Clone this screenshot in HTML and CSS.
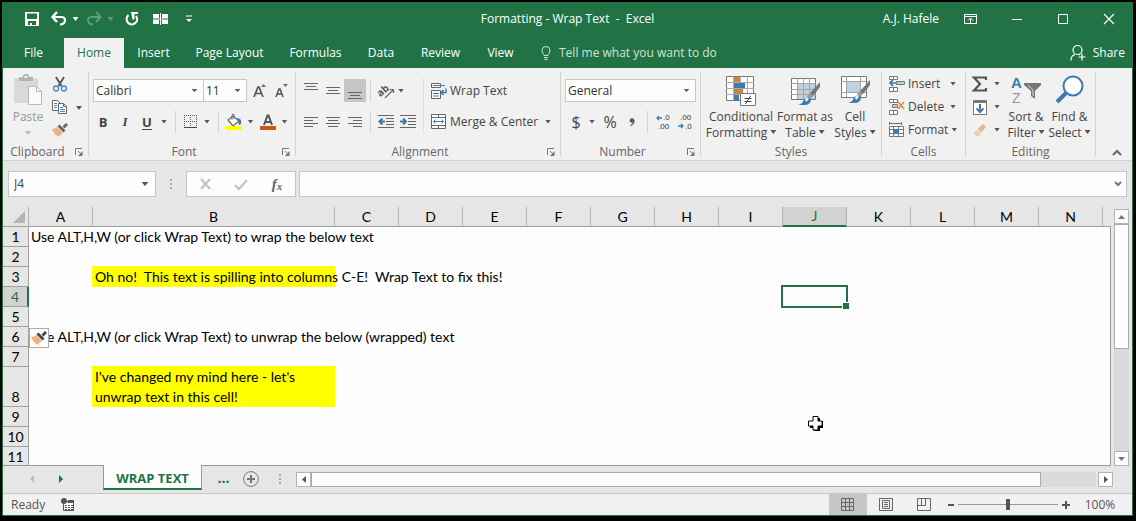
FILE: index.html
```html
<!DOCTYPE html>
<html lang="en">
<head>
<meta charset="utf-8">
<title>Formatting - Wrap Text - Excel</title>
<link rel="stylesheet" href="styles.css">
</head>
<body>
<div class="window">
  <header class="titlebar">
    <div class="quick">
      <button class="q q-save" aria-label="Save"><svg width="14" height="14" viewBox="0 0 14 14"><path d="M0 0h14v14H0zM2 1.500v5.500h10V1.500zM3 9v4h2v-2h2v2h4V9z" fill="#fff" fill-rule="evenodd"/></svg></button>
      <button class="q q-wide" aria-label="Undo"><svg width="16" height="14" viewBox="0 0 16 14"><path d="M2 5h8c6 0 5 7-1 7.500" fill="none" stroke="#fff" stroke-width="2.200"/><path d="M6 0L1.500 5L6 10" fill="none" stroke="#fff" stroke-width="2.400"/></svg><span class="caret"></span></button>
      <button class="q q-wide q-off" aria-label="Redo"><svg width="16" height="14" viewBox="0 0 16 14"><path d="M14 5H6C0 5 1 12 7 12.500" fill="none" stroke="#fff" stroke-width="2"/><path d="M10 0l4.500 5L10 10" fill="none" stroke="#fff" stroke-width="2"/></svg><span class="caret"></span></button>
      <button class="q q-mid" aria-label="Refresh"><svg width="14" height="14" viewBox="0 0 14 14"><path d="M3.500 3.200A5.200 5.200 0 1 0 11 4" fill="none" stroke="#fff" stroke-width="2.200"/><path d="M6 0h7v2h-3.500v5.500H7.500z" fill="#fff"/></svg></button>
      <button class="q q-mid" aria-label="Freeze panes"><svg width="15" height="12" viewBox="0 0 15 12"><path d="M0 1h6v4H0zM9 1h6v4H9zM0 7h6v4H0zM9 7h6v4H9z" fill="#fff"/><path d="M7.500 0v12M0 6h15" stroke="#fff"/></svg></button>
      <button class="q q-end" aria-label="Customize toolbar"><svg width="6" height="8" viewBox="0 0 6 8"><path d="M0 1h6" stroke="#fff"/><path d="M0 4h6L3 7z" fill="#fff"/></svg></button>
    </div>
    <h1 class="title">Formatting - Wrap Text&nbsp; -&nbsp; Excel</h1>
    <div class="controls">
      <span class="user">A.J. Hafele</span>
      <button class="wc" aria-label="Ribbon display options"><svg width="14" height="11" viewBox="0 0 14 11"><path d="M.5 .5h12v9H.5zM.5 2.500h12M6.500 9V4.500M4 6.500l2.500-2.500L9 6.500" fill="none" stroke="#fff"/></svg></button>
      <button class="wc" aria-label="Minimize"><svg width="10" height="10" viewBox="0 0 10 10"><path d="M0 5.500h10" stroke="#fff"/></svg></button>
      <button class="wc" aria-label="Maximize"><svg width="10" height="10" viewBox="0 0 10 10"><path d="M.5 .5h9v9h-9z" fill="none" stroke="#fff"/></svg></button>
      <button class="wc" aria-label="Close"><svg width="10" height="10" viewBox="0 0 10 10"><path d="M0 0l10 10M10 0L0 10" stroke="#fff" stroke-width="1.200"/></svg></button>
    </div>
  </header>

  <nav class="tabs">
    <a href="#file">File</a><a href="#home" class="active">Home</a><a href="#insert">Insert</a><a href="#layout">Page Layout</a><a href="#formulas">Formulas</a><a href="#data">Data</a><a href="#review">Review</a><a href="#view">View</a>
    <button class="tell"><svg width="10" height="14" viewBox="0 0 10 14"><path d="M3 9.500C3 8 1 7 1 4.500a4 4 0 0 1 8 0C9 7 7 8 7 9.500zM3 11.500h4M3.500 13.500h3" fill="none" stroke="#cfe3d8"/></svg>Tell me what you want to do</button>
    <button class="share"><svg width="16" height="16" viewBox="0 0 16 16"><path d="M1 15.500C1 12 3 10 5 9.500M7.500 .5a4.500 4.500 0 0 1 0 9 4.500 4.500 0 0 1 0-9M9 9.500l1 .5M12 8.500v7M8.500 12h7" fill="none" stroke="#fff" stroke-width="1.200"/></svg>Share</button>
  </nav>

  <section class="ribbon">
    <div class="group">
      <div class="body clip">
        <button class="paste"><svg width="30" height="32" viewBox="0 0 30 32"><path d="M1 4h24v25H1z" fill="#d9d9d9"/><path d="M6 7V3h4V1q3-2 6 0v2h4v4z" fill="#b3b3b3"/><path d="M11.500 2h3v2h-3z" fill="#f1f1f1"/><path d="M15.500 12.500h8l5 5v13h-13z" fill="#fbfbff" stroke="#b8b8b8"/><path d="M23.500 12v5.500H29" fill="none" stroke="#b8b8b8"/></svg><span>Paste</span><span class="caret"></span></button>
        <div class="stack">
          <button aria-label="Cut"><svg width="16" height="16" viewBox="0 0 16 16"><path d="M4 1l5.500 9M12 1l-5.500 9" stroke="#5a5a5a" stroke-width="2"/><circle cx="4" cy="12.500" r="2.500" fill="none" stroke="#4a86b8" stroke-width="1.300"/><circle cx="12" cy="12.500" r="2.500" fill="none" stroke="#4a86b8" stroke-width="1.300"/></svg></button>
          <button aria-label="Copy"><svg width="16" height="16" viewBox="0 0 16 16"><path d="M.5 1.500h5l3 3v7h-8z" fill="#fff" stroke="#666"/><path d="M2 4.500h3M2 6.500h3M2 8.500h3" stroke="#4a86b8"/><path d="M6.500 4.500h5l3 3v7h-8z" fill="#fff" stroke="#666"/><path d="M11.500 4.500v3h3" fill="none" stroke="#666"/><path d="M8 8.500h3M8 10.500h5M8 12.500h5" stroke="#4a86b8"/></svg></button>
          <button aria-label="Format painter"><svg width="16" height="14" viewBox="0 0 16 14"><path d="M0 6q3 0 5-2l6 6q-3 1-4 4Q2 11 0 6z" fill="#edb27e"/><path d="M5.500 3.500l2-2 6 6-2 2z" fill="#666"/><path d="M10.500 3.500L14 0l2 2-3.500 3.500z" fill="#666"/></svg></button>
        </div>
        <span class="caret"></span>
      </div>
      <div class="foot"><h2>Clipboard</h2><button class="launch" aria-label="Clipboard options"><svg width="8" height="8" viewBox="0 0 8 8"><path d="M.5 7V.5H7" fill="none" stroke="#777"/><path d="M3 3l4 4" stroke="#777"/><path d="M7.500 3v5H3z" fill="#777"/></svg></button></div>
    </div>
    <i class="rule"></i>

    <div class="group">
      <div class="body rows">
        <div class="row font1">
          <select aria-label="Font"><option>Calibri</option></select>
          <select aria-label="Font size"><option>11</option></select>
          <button aria-label="Increase font size"><svg width="14" height="16" viewBox="0 0 14 16"><path d="M1 14L5 4h1l4 10M2.500 10.500h6" fill="none" stroke="#555" stroke-width="1.700"/><path d="M8 4l2.500-3L13 4z" fill="#3d7ab0"/></svg></button>
          <button aria-label="Decrease font size"><svg width="14" height="16" viewBox="0 0 14 16"><path d="M1 14l3-8h1l3 8M2 11h5" fill="none" stroke="#555" stroke-width="1.600"/><path d="M8 1h5l-2.500 3z" fill="#3d7ab0"/></svg></button>
        </div>
        <div class="row font2">
          <button><b>B</b></button><button><b class="it">I</b></button><button><b class="un">U</b></button><span class="caret"></span><i class="sep"></i>
          <button aria-label="Borders"><svg width="13" height="13" viewBox="0 0 13 13"><path d="M.5 0v12M6.500 0v12M12.500 0v12M0 .5h13M0 6.500h13" stroke="#555" stroke-dasharray="1 1"/><path d="M0 12.500h13" stroke="#444"/></svg></button><span class="caret"></span><i class="sep"></i>
          <button aria-label="Fill color"><svg width="16" height="16" viewBox="0 0 16 16"><path d="M2 6l5-4 6 5-6 5z" fill="#fff" stroke="#666" stroke-width="1.200"/><path d="M6 6V1q1.500-2 2 0v4" fill="none" stroke="#666"/><path d="M11 4q5 0 4 6l-2 1z" fill="#3d7ab0"/><path d="M0 12h16v4H0z" fill="#ff0"/></svg></button><span class="caret"></span>
          <button aria-label="Font color"><svg width="16" height="16" viewBox="0 0 16 16"><path d="M4 11l3.500-9.500h1L12 11M5.500 8h5" fill="none" stroke="#555" stroke-width="2"/><path d="M0 12h16v4H0z" fill="#c55a11"/></svg></button><span class="caret"></span>
        </div>
      </div>
      <div class="foot"><h2>Font</h2><button class="launch" aria-label="Font options"><svg width="8" height="8" viewBox="0 0 8 8"><path d="M.5 7V.5H7" fill="none" stroke="#777"/><path d="M3 3l4 4" stroke="#777"/><path d="M7.500 3v5H3z" fill="#777"/></svg></button></div>
    </div>
    <i class="rule"></i>

    <div class="group">
      <div class="body align">
        <div class="aligngrid">
          <button aria-label="Top align"><svg width="14" height="16" viewBox="0 0 14 16"><path d="M0 .5h14M2 3.500h10M0 6.500h14" stroke="#666"/></svg></button>
          <button aria-label="Middle align"><svg width="14" height="16" viewBox="0 0 14 16"><path d="M0 4.500h14M2 7.500h10M0 10.500h14" stroke="#666"/></svg></button>
          <button aria-label="Bottom align" class="on"><svg width="14" height="16" viewBox="0 0 14 16"><path d="M0 9.500h14M2 12.500h10M0 15.500h14" stroke="#666"/></svg></button>
          <i class="sep"></i>
          <button aria-label="Orientation"><svg width="18" height="16" viewBox="0 0 18 16"><text x="0" y="11" transform="rotate(-40 6 8)" class="ab">ab</text><path d="M8 15l8-8M12.500 6.500H16.500V10" fill="none" stroke="#666" stroke-width="1.200"/></svg></button>
          <span class="caret near"></span>
          <button aria-label="Align left"><svg width="14" height="12" viewBox="0 0 14 12"><path d="M0 1.500h14M0 4.500h9M0 7.500h14M0 10.500h9" stroke="#666"/></svg></button>
          <button aria-label="Center"><svg width="14" height="12" viewBox="0 0 14 12"><path d="M0 1.500h14M2 4.500h10M0 7.500h14M2 10.500h10" stroke="#666"/></svg></button>
          <button aria-label="Align right"><svg width="14" height="12" viewBox="0 0 14 12"><path d="M0 1.500h14M5 4.500h9M0 7.500h14M5 10.500h9" stroke="#666"/></svg></button>
          <i class="sep"></i>
          <button aria-label="Decrease indent"><svg width="16" height="14" viewBox="0 0 16 14"><path d="M0 .5h16M8 3.500h8M8 6.500h8M8 9.500h8M0 12.500h16" stroke="#666"/><path d="M7 6.500H2M4.500 3.500l-3 3 3 3" fill="none" stroke="#3d7ab0" stroke-width="2"/></svg></button>
          <button aria-label="Increase indent"><svg width="16" height="14" viewBox="0 0 16 14"><path d="M0 .5h16M8 3.500h8M8 6.500h8M8 9.500h8M0 12.500h16" stroke="#666"/><path d="M0 6.500h5M3 3.500l3 3-3 3" fill="none" stroke="#3d7ab0" stroke-width="2"/></svg></button>
        </div>
        <i class="tall"></i>
        <div class="wraps">
          <button class="lab"><svg width="16" height="16" viewBox="0 0 16 16"><path d="M.5 .5h9v4h-9zM.5 7.500h9v8h-9z" fill="#fff" stroke="#666"/><path d="M2 2.500h12M2 10.500h6M2 13h6" stroke="#3d7ab0" stroke-width="1.200"/><path d="M15 5.500v4h-5M12.500 7l-2.500 2.500 2.500 2.500" fill="none" stroke="#3d7ab0" stroke-width="1.500"/></svg>Wrap Text</button>
          <button class="lab"><svg width="16" height="16" viewBox="0 0 16 16"><path d="M.5 .5h14v14H.5zM.5 3.500h14M.5 11.500h14M7.500 .5v3M7.500 11.500v3" fill="#fff" stroke="#666"/><path d="M3 7.500h9M4.500 5.500l-2 2 2 2M10.500 5.500l2 2-2 2" fill="none" stroke="#3d7ab0"/></svg>Merge &amp; Center<span class="caret push"></span></button>
        </div>
      </div>
      <div class="foot"><h2>Alignment</h2><button class="launch" aria-label="Alignment options"><svg width="8" height="8" viewBox="0 0 8 8"><path d="M.5 7V.5H7" fill="none" stroke="#777"/><path d="M3 3l4 4" stroke="#777"/><path d="M7.500 3v5H3z" fill="#777"/></svg></button></div>
    </div>
    <i class="rule"></i>

    <div class="group">
      <div class="body rows">
        <div class="row num1"><select aria-label="Number format"><option>General</option></select></div>
        <div class="row num2">
          <button class="big">$</button><span class="caret"></span><button class="big">%</button><button aria-label="Comma style"><svg width="6" height="8" viewBox="0 0 6 8"><circle cx="3" cy="2.500" r="2.300" fill="#555"/><path d="M5 2.500Q5 6 1.500 7.500" fill="none" stroke="#555" stroke-width="1.300"/></svg></button><i class="sep"></i>
          <button aria-label="Increase decimal"><svg width="16" height="16" viewBox="0 0 16 16"><text x="8" y="6" class="dec">.0</text><text x="3" y="15" class="dec">.00</text><path d="M7 4H2M4 2L2 4l2 2" fill="none" stroke="#3d7ab0" stroke-width="1.300"/></svg></button>
          <button aria-label="Decrease decimal"><svg width="16" height="16" viewBox="0 0 16 16"><text x="3" y="6" class="dec">.00</text><text x="8" y="15" class="dec">.0</text><path d="M1 12h5M4 10l2 2-2 2" fill="none" stroke="#3d7ab0" stroke-width="1.300"/></svg></button>
        </div>
      </div>
      <div class="foot"><h2>Number</h2><button class="launch" aria-label="Number options"><svg width="8" height="8" viewBox="0 0 8 8"><path d="M.5 7V.5H7" fill="none" stroke="#777"/><path d="M3 3l4 4" stroke="#777"/><path d="M7.500 3v5H3z" fill="#777"/></svg></button></div>
    </div>
    <i class="rule"></i>

    <div class="group">
      <div class="body styles">
        <button class="large"><svg width="30" height="32" viewBox="0 0 30 32"><path d="M.5 2.500h27v24H.5z" fill="#fff" stroke="#777"/><path d="M7.500 2v25M14.500 2v25M21.500 2v25M0 8.500h28M0 14.500h28M0 20.500h28" stroke="#aaa"/><path d="M8 3h6v5H8zM8 15h9v5H8z" fill="#c8873c"/><path d="M8 9h11v5H8zM8 21h5v5H8z" fill="#3d7ab0"/><path d="M14.500 19.500h15v12h-15z" fill="#fff" stroke="#777"/><path d="M18.500 24.500h7M18.500 27.500h7M24.500 22l-5 8" stroke="#444" fill="none"/></svg><span>Conditional</span><span>Formatting<i class="caret"></i></span></button>
        <button class="large"><svg width="30" height="32" viewBox="0 0 30 32"><path d="M1.500 4.500h24v21h-24z" fill="#fff" stroke="#777"/><path d="M8 10h17v15H8z" fill="#bed3e0"/><path d="M7.500 4v21M13.500 4v21M19.500 4v21M1 9.500h25M1 15.500h25M1 20.500h25" stroke="#a4a4a4"/><path d="M30 8l-10 11 3 3 7-9z" fill="#777"/><path d="M20 19l-3 3 3 3 3-3z" fill="#999"/><path d="M8 31q5-1 6-6 4-3 7 0 0 6-7 6z" fill="#3d7ab0"/><path d="M15 25q2-2 4 0l-3 3z" fill="#fff"/></svg><span>Format as</span><span>Table<i class="caret"></i></span></button>
        <button class="large"><svg width="30" height="32" viewBox="0 0 30 32"><path d="M1.500 2.500h25v21h-25z" fill="#fff" stroke="#777"/><path d="M6.500 2v21M20.500 2v21M1 7.500h25M1 18.500h25" stroke="#a4a4a4"/><path d="M7 8h13v10H7z" fill="#bed3e0"/><path d="M30 6L20 17l3 3 7-9z" fill="#777"/><path d="M20 17l-3 3 3 3 3-3z" fill="#999"/><path d="M8 29q5-1 6-6 4-3 7 0 0 6-7 6z" fill="#3d7ab0"/><path d="M15 23q2-2 4 0l-3 3z" fill="#fff"/></svg><span>Cell</span><span>Styles<i class="caret"></i></span></button>
      </div>
      <div class="foot"><h2>Styles</h2></div>
    </div>
    <i class="rule"></i>

    <div class="group">
      <div class="body cells">
        <button class="lab"><svg width="16" height="16" viewBox="0 0 16 16"><path d="M.5 .5h4v3h-4zM4.500 .5h4v3h-4zM.5 11.500h4v4h-4zM4.500 11.500h4v4h-4z" fill="#fff" stroke="#777"/><path d="M7.500 5.500h8v3h-8z" fill="#bed3e0" stroke="#777"/><path d="M7 7H1M4 4L1 7l3 3" fill="none" stroke="#3d7ab0" stroke-width="1.700"/></svg>Insert<span class="caret push"></span></button>
        <button class="lab"><svg width="16" height="16" viewBox="0 0 16 16"><path d="M.5 .5h4v3h-4zM4.500 .5h4v3h-4zM.5 11.500h4v4h-4zM4.500 11.500h4v4h-4z" fill="#fff" stroke="#777"/><path d="M3.500 5.500h5v3h-5z" fill="#bed3e0" stroke="#777"/><path d="M9 3l6 7M15 3l-6 7" stroke="#dc9136" stroke-width="1.800"/></svg>Delete<span class="caret push"></span></button>
        <button class="lab"><svg width="16" height="16" viewBox="0 0 16 16"><path d="M.5 0v3M12.500 0v3M1 1.500h11" stroke="#3d7ab0"/><path d="M.5 4.500h14v10H.5zM4.500 4v11M9.500 4v11M0 7.500h15M0 11.500h15" fill="#fff" stroke="#777"/><path d="M4 7h6v4H4z" fill="#3d7ab0"/></svg>Format<span class="caret push"></span></button>
      </div>
      <div class="foot"><h2>Cells</h2></div>
    </div>
    <i class="rule"></i>

    <div class="group">
      <div class="body editing">
        <div class="pairs">
          <button aria-label="AutoSum"><svg width="16" height="16" viewBox="0 0 16 16"><path d="M14 4V1.500H2L8 8l-6 6.500h12V12" fill="none" stroke="#555" stroke-width="2.200"/></svg></button><span class="caret"></span>
          <button aria-label="Fill"><svg width="14" height="16" viewBox="0 0 14 16"><path d="M.5 1.500h13v14H.5z" fill="#fff" stroke="#777"/><path d="M0 1h14v3H0z" fill="#777"/><path d="M7 5v8M3.500 9.500L7 13l3.500-3.500" fill="none" stroke="#3d7ab0" stroke-width="2"/></svg></button><span class="caret"></span>
          <button aria-label="Clear"><svg width="14" height="14" viewBox="0 0 14 14"><path d="M4.500 6L10 1l3 3-5 6z" fill="#e9b78f"/><path d="M3.500 7l4 4-2 2H3L1 10z" fill="#efc8a8"/></svg></button><span class="caret"></span>
        </div>
        <button class="large"><svg width="30" height="32" viewBox="0 0 30 32"><text x="0" y="14" class="az a">A</text><text x="1" y="29" class="az z">Z</text><path d="M13 9h17v2l-6 6v8l-4-3v-5l-7-6z" fill="#777"/><path d="M17 11l5 5v6" fill="none" stroke="#ddd"/></svg><span>Sort &amp;</span><span>Filter<i class="caret"></i></span></button>
        <button class="large"><svg width="30" height="32" viewBox="0 0 30 32"><circle cx="18" cy="12" r="9.500" fill="#fff" stroke="#3d7ab0" stroke-width="2"/><path d="M11 19L2 28" stroke="#3d7ab0" stroke-width="4"/></svg><span>Find &amp;</span><span>Select<i class="caret"></i></span></button>
      </div>
      <div class="foot"><h2>Editing</h2></div>
    </div>
    <i class="rule"></i>
    <button class="collapse" aria-label="Collapse ribbon"><svg width="10" height="7" viewBox="0 0 10 7"><path d="M1 6l4-4 4 4" fill="none" stroke="#666" stroke-width="2"/></svg></button>
  </section>

  <section class="formula">
    <div class="namebox"><input aria-label="Name box" value="J4"><button aria-label="Names"><span class="caret"></span></button></div>
    <span class="dots"><svg width="2" height="10" viewBox="0 0 2 10"><path d="M0 0h2v2H0zM0 4h2v2H0zM0 8h2v2H0z" fill="#aaa"/></svg></span>
    <div class="fx">
      <button aria-label="Cancel"><svg width="11" height="10" viewBox="0 0 11 10"><path d="M1 0l9 10M10 0L1 10" stroke="#c0c0c0" stroke-width="2"/></svg></button>
      <button aria-label="Enter"><svg width="14" height="11" viewBox="0 0 14 11"><path d="M1 6l4 4 8-9" fill="none" stroke="#c4c4c4" stroke-width="2.400"/></svg></button>
      <button class="fn">f<small>x</small></button>
    </div>
    <div class="bar"><input aria-label="Formula"><button aria-label="Expand formula bar"><svg width="8" height="6" viewBox="0 0 8 6"><path d="M1 1l3 3 3-3" fill="none" stroke="#777" stroke-width="2"/></svg></button></div>
  </section>

  <main class="sheet">
    <div class="pane">
      <table>
        <colgroup><col class="c-num"><col class="c"><col class="c-wide"><col class="c" span="12"><col></colgroup>
        <thead><tr><th class="corner"><svg width="12" height="12" viewBox="0 0 12 12"><path d="M12 0v12H0z" fill="#b3b3b3"/></svg></th><th>A</th><th>B</th><th>C</th><th>D</th><th>E</th><th>F</th><th>G</th><th>H</th><th>I</th><th class="sel">J</th><th>K</th><th>L</th><th>M</th><th>N</th><th class="rest"></th></tr></thead>
        <tbody>
          <tr><th>1</th><td colspan="15">Use ALT,H,W (or click Wrap Text) to wrap the below text</td></tr>
          <tr><th>2</th><td colspan="15"></td></tr>
          <tr><th>3</th><td></td><td class="hi">Oh no!&nbsp; This text is spilling into columns C-E!&nbsp; Wrap Text to fix this!</td><td colspan="13"></td></tr>
          <tr><th class="sel">4</th><td colspan="9"></td><td class="cur"><span class="ring"></span></td><td colspan="5"></td></tr>
          <tr><th>5</th><td colspan="15"></td></tr>
          <tr><th>6</th><td colspan="15" class="tagged">Use ALT,H,W (or click Wrap Text) to unwrap the below (wrapped) text<button class="tag" aria-label="Paste options"><svg width="16" height="14" viewBox="0 0 16 14"><path d="M0 6q3 0 5-2l6 6q-3 1-4 4Q2 11 0 6z" fill="#edb27e"/><path d="M5.500 3.500l2-2 6 6-2 2z" fill="#444"/><path d="M10.500 3.500L14 0l2 2-3.500 3.500z" fill="#444"/></svg></button></td></tr>
          <tr><th>7</th><td colspan="15"></td></tr>
          <tr class="double"><th>8</th><td></td><td class="hi wrap">I've changed my mind here - let's unwrap text in this cell!</td><td colspan="13"></td></tr>
          <tr><th>9</th><td colspan="15"></td></tr>
          <tr><th>10</th><td colspan="15"></td></tr>
          <tr><th>11</th><td colspan="15"></td></tr>
        </tbody>
      </table>
      <svg class="pointer" width="16" height="16" viewBox="0 0 16 16"><path d="M6 2h6v3h3v7h-3v3H6v-3H2V6h4z" fill="#000"/><path d="M5 .500h5v4.500h4v5h-4v4H5v-4H.500V5H5z" fill="#fff" stroke="#000"/></svg>
    </div>
    <div class="vscroll">
      <button aria-label="Scroll up"><svg width="7" height="4" viewBox="0 0 7 4"><path d="M0 4l3.500-4L7 4z" fill="#777"/></svg></button>
      <div class="track"><div class="thumb"></div></div>
      <button aria-label="Scroll down"><svg width="7" height="4" viewBox="0 0 7 4"><path d="M0 0h7L3.500 4z" fill="#777"/></svg></button>
    </div>
  </main>

  <footer class="strip">
    <button class="nav" aria-label="Previous sheet"><svg width="4" height="8" viewBox="0 0 4 8"><path d="M4 0v8L0 4z" fill="#bbb"/></svg></button>
    <button class="nav" aria-label="Next sheet"><svg width="4" height="8" viewBox="0 0 4 8"><path d="M0 0v8l4-4z" fill="#217346"/></svg></button>
    <a class="sheettab" href="#wrap">WRAP TEXT</a>
    <button class="more">...</button>
    <button class="add" aria-label="New sheet"><svg width="16" height="16" viewBox="0 0 16 16"><circle cx="8" cy="8" r="7.400" fill="none" stroke="#777"/><path d="M8 4v8M4 8h8" stroke="#777" stroke-width="2"/></svg></button>
    <span class="dots narrow"><svg width="2" height="10" viewBox="0 0 2 10"><path d="M0 0h2v2H0zM0 4h2v2H0zM0 8h2v2H0z" fill="#aaa"/></svg></span>
    <div class="hscroll">
      <button aria-label="Scroll left"><svg width="4" height="7" viewBox="0 0 4 7"><path d="M4 0v7L0 3.500z" fill="#555"/></svg></button>
      <div class="track"><div class="thumb"></div></div>
      <button aria-label="Scroll right"><svg width="4" height="7" viewBox="0 0 4 7"><path d="M0 0v7l4-3.500z" fill="#555"/></svg></button>
    </div>
  </footer>

  <footer class="status">
    <span class="ready">Ready</span>
    <button aria-label="Record macro"><svg width="14" height="14" viewBox="0 0 14 14"><path d="M2.500 3.500h10v9h-10z" fill="#fff" stroke="#555"/><path d="M7 2h6v3H7z" fill="#555"/><path d="M4 7.500h8M4 9.500h8M4 11.500h8" stroke="#555" stroke-dasharray="2 1"/><circle cx="3" cy="3" r="3" fill="#555"/></svg></button>
    <span class="grow"></span>
    <button class="view on" aria-label="Normal view"><svg width="14" height="14" viewBox="0 0 14 14"><path d="M.5 .5h12v12H.5zM4.500 0v13M8.500 0v13M0 4.500h13M0 8.500h13" fill="none" stroke="#666"/></svg></button>
    <button class="view" aria-label="Page layout view"><svg width="14" height="14" viewBox="0 0 14 14"><path d="M.5 .5h13v12H.5zM3.500 2.500h7v8h-7zM5 4.500h4M5 6.500h4M5 8.500h4" fill="none" stroke="#666"/></svg></button>
    <button class="view" aria-label="Page break view"><svg width="14" height="14" viewBox="0 0 14 14"><path d="M.5 .5h13v12H.5zM4.500 .5v7M8.500 .5v7M.5 7.500h8" fill="none" stroke="#666"/></svg></button>
    <button class="zoombtn" aria-label="Zoom out"><svg width="8" height="8" viewBox="0 0 8 8"><path d="M1 4h6" stroke="#555" stroke-width="2"/></svg></button>
    <input type="range" min="0" max="100" value="50" aria-label="Zoom">
    <button class="zoombtn" aria-label="Zoom in"><svg width="8" height="8" viewBox="0 0 8 8"><path d="M0 4h8M4 0v8" stroke="#555" stroke-width="2"/></svg></button>
    <button class="pct">100%</button>
  </footer>
</div>
</body>
</html>
```
FILE: styles.css
```css
* { box-sizing: border-box; }
body {
  margin: 0;
  padding: 2px 3px 5px 2px;
  height: 100vh;
  background: #000;
  font: 12px/16px "Open Sans", "Noto Sans", sans-serif;
  color: #444;
}
button, input, select { font: inherit; color: inherit; margin: 0; padding: 0; border: 0; background: none; border-radius: 0; min-width: 0; }
button { display: flex; align-items: center; justify-content: center; white-space: nowrap; }
svg { display: block; flex: none; overflow: visible; }
a { text-decoration: none; color: inherit; }
h1, h2 { margin: 0; font: inherit; }

.window { display: flex; flex-direction: column; height: 100%; min-width: 0; border: solid #217346; border-width: 0 1px 1px; background: #e6e6e6; overflow: hidden; }
.caret { display: inline-block; align-self: center; justify-self: center; width: 6px; height: 4px; background: #555; clip-path: polygon(0 0, 100% 0, 50% 100%); flex: none; }

/* title bar */
.titlebar { display: grid; grid-template-columns: 1fr auto 1fr; align-items: center; height: 36px; padding-bottom: 2px; flex: none; background: #217346; color: #fff; }
.quick { display: flex; padding-left: 14px; }
.q { height: 34px; }
.q .caret { background: #fff; margin-left: 6px; }
.q-save { width: 30px; }
.q-wide { width: 35px; }
.q-off { opacity: .3; }
.q-mid { width: 29px; }
.q-end { width: 28px; }
.title { white-space: nowrap; }
.controls { display: flex; justify-content: flex-end; align-items: center; }
.user { margin-right: 9px; }
.wc { width: 46px; height: 34px; }

/* ribbon tabs */
.tabs { display: grid; grid-template-columns: 61px 60px 59px 93px 79px 52px 67px 53px auto 1fr; height: 30px; flex: none; background: #217346; color: #fff; }
.tabs a { display: flex; align-items: center; justify-content: center; white-space: nowrap; }
.tabs .active { background: #f1f1f1; color: #217346; }
.tell { gap: 8px; padding-left: 14px; color: #cfe3d8; }
.share { justify-self: end; gap: 7px; padding-right: 7px; }

/* ribbon */
.ribbon { display: flex; height: 93px; flex: none; background: #f1f1f1; border-bottom: 1px solid #d2d2d2; }
.rule { width: 1px; margin: 4px 0; background: #d2d2d2; flex: none; }
.group { display: flex; flex-direction: column; flex: none; }
.body { height: 76px; padding: 4px 4px 0; }
.foot { display: flex; align-items: center; height: 16px; color: #666; }
.foot h2 { flex: 1; text-align: center; }
.launch { width: 16px; height: 16px; padding-right: 3px; }
.sep { width: 1px; height: 22px; background: #d2d2d2; justify-self: center; }
.rows { padding-top: 11px; display: flex; flex-direction: column; gap: 8px; }
.row { display: grid; align-items: center; height: 23px; }
select { appearance: none; height: 23px; padding: 0 2px; border: 1px solid #c6c6c6; color: #333; background: linear-gradient(#666, #666) no-repeat right 7px center / 3px 1px, linear-gradient(#666, #666) no-repeat right 6px top 9px / 5px 1px, linear-gradient(#666, #666) no-repeat right 8px top 11px / 1px 1px, #fdfdfd; }
.font1 { grid-template-columns: 111px 43px 26px 18px; }
.font1 select + select { border-left: 0; }
.font2 { grid-template-columns: 22px 22px 22px 12px 10px 21px 12px 10px 22px 11px 24px 9px; margin-left: -1px; }
.font2 b { font-size: 13px; }
.it { font-family: "Liberation Serif", serif; font-style: italic; }
.un { text-decoration: underline; text-underline-offset: 2px; }
.align { display: flex; padding-top: 10px; }
.aligngrid { display: grid; grid-template-columns: 22px 22px 22px 9px 22px 22px; grid-template-rows: 23px 23px; row-gap: 8px; align-items: center; padding-top: 1px; }
.aligngrid button { height: 23px; }
.on { background: #c6c6c6; }
.near { justify-self: start; margin-left: 1px; }
.ab { font: bold 10px "Open Sans", sans-serif; fill: #555; }
.tall { width: 1px; height: 56px; margin: 0 7px 0 4px; background: #dde1e2; }
.wraps { display: grid; grid-template-rows: 23px 23px; row-gap: 8px; width: 125px; padding-top: 1px; }
.lab { justify-content: flex-start; gap: 3px; }
.push { margin-left: auto; margin-right: 5px; }
.num1 { grid-template-columns: 131px; }
.num2 { grid-template-columns: 22px 10px 26px 18px 12px 20px 23px; }
.big { font-size: 16px; }
.dec { font: 8px "Liberation Sans", sans-serif; fill: #333; }
.styles { display: grid; grid-template-columns: 72px 56px 44px; }
.large { flex-direction: column; justify-content: flex-start; gap: 0; }
.large svg { margin: 2px 0 3px; }
.large .caret { margin-left: 3px; vertical-align: 3px; }
.cells { display: grid; grid-template-rows: 23px 23px 23px; width: 83px; padding-left: 7px; }
.editing { display: grid; grid-template-columns: 34px 44px 43px; }
.pairs { display: grid; grid-template-columns: 20px 14px; grid-template-rows: repeat(3, 23px); }
.az { font: bold 15px "Liberation Sans", sans-serif; }
.a { fill: #3d7ab0; }
.z { fill: #9a92b4; font-weight: normal; font-size: 14px; }
.clip { display: grid; grid-template-columns: 38px 20px 14px; width: 85px; padding-left: 6px; column-gap: 3px; }
.clip > .caret { margin-right: 2px; }
.paste { flex-direction: column; justify-content: flex-start; color: #999; }
.paste svg { margin: 2px 0 3px; }
.paste .caret { margin-top: 6px; background: #bbb; }
.stack { display: grid; grid-template-rows: repeat(3, 23px); }
.collapse { margin-left: auto; align-self: flex-end; width: 30px; height: 16px; }

/* formula bar */
.formula { display: flex; flex: none; padding: 10px 5px; }
.namebox, .fx, .bar { display: flex; height: 26px; border: 1px solid #c6c6c6; background: #fdfdfd; }
.namebox { width: 148px; }
.namebox input { flex: 1; padding-left: 5px; }
.namebox button { width: 20px; }
.namebox .caret { width: 7px; height: 4px; }
.dots { display: flex; width: 30px; align-items: center; justify-content: center; }
.fx { width: 110px; margin-right: 3px; }
.fx button { flex: 1; }
.fx .fn { font: italic bold 15px "Liberation Serif", serif; color: #666; }
.fn small { font-size: 11px; align-self: center; padding-top: 3px; }
.bar { flex: 1; }
.bar input { flex: 1; }
.bar button { width: 16px; }

/* worksheet */
.sheet { display: flex; flex: 1; min-height: 0; }
.pane { position: relative; flex: 1; min-width: 0; overflow: hidden; border-bottom: 1px solid #999; }
table { width: 100%; table-layout: fixed; border-collapse: separate; border-spacing: 0; background: #fdfdfd; color: #000; font: 14px/20px Lato, "Open Sans", sans-serif; }
.c-num { width: 26px; }
.c { width: 64px; }
.c-wide { width: 242px; }
tr { height: 20px; }
.double { height: 40px; }
th { padding: 0; font-weight: normal; line-height: 19px; background: #e6e6e6; border: 0 solid #a0a0a0; vertical-align: bottom; }
thead th { border-width: 0 1px 1px 0; border-right-color: #b4b4b4; }
tbody th { border-width: 0 1px 1px 0; }
thead .rest { border-right: 0; }
.corner svg { margin: 0 3px 3px auto; }
thead .sel { background: #d2d2d2; color: #217346; border-bottom: 2px solid #217346; line-height: 18px; }
tbody .sel { background: #d2d2d2; color: #217346; border-right: 2px solid #217346; }
td { padding: 0 2px; white-space: nowrap; vertical-align: bottom; }
td:last-child { border-right: 1px solid #999; }
.hi { background: #ff0; box-shadow: -1px 0 #ff0, 0 -1px #ff0, -1px -1px #ff0; }
.wrap { white-space: normal; }
.cur, .tagged { position: relative; }
.ring { position: absolute; inset: -2px -1px -1px -2px; border: 2px solid #217346; }
.ring::after { content: ""; position: absolute; right: -3px; bottom: -3px; width: 6px; height: 6px; background: #217346; border: solid #fdfdfd; border-width: 1px 0 0 1px; }
.tag { position: absolute; left: 0; top: 1px; width: 20px; height: 20px; border: 1px solid #aaa; background: #fdfdfd; }
.pointer { position: absolute; left: 805px; top: 209px; }
.vscroll { display: flex; flex-direction: column; width: 21px; padding: 2px 3px 0; }
.vscroll button, .hscroll button { width: 15px; height: 15px; border: 1px solid #b4b4b4; background: #fdfdfd; flex: none; }
.track { flex: 1; background: #dadada; }
.thumb { border: 1px solid #ababab; background: #fdfdfd; }
.vscroll .thumb { height: 55%; }

/* sheet tabs */
.strip { display: flex; height: 28px; flex: none; border-bottom: 1px solid #c6c6c6; }
.nav { width: 29px; height: 26px; }
.nav:first-child { margin-left: 14px; }
.sheettab { display: flex; align-items: center; justify-content: center; position: relative; width: 99px; height: 25px; margin: -1px 0 0 28px; padding-top: 2px; background: #fdfdfd; border: solid #999; border-width: 0 1px; border-bottom: 2px solid #217346; color: #217346; font-size: 13px; font-weight: bold; }
.more { width: 43px; height: 24px; color: #217346; font-weight: bold; font-size: 14px; }
.add { width: 14px; height: 26px; margin-left: -1px; }
.narrow { width: 38px; height: 26px; padding-left: 6px; }
.hscroll { display: flex; flex: 1; align-items: flex-start; padding: 6px 19px 0 0; }
.hscroll .track { height: 15px; margin-right: 2px; }
.hscroll .thumb { height: 15px; width: 93%; }

/* status bar */
.status { display: flex; align-items: center; height: 21px; flex: none; background: #f1f1f1; color: #555; }
.ready { padding: 0 16px 0 8px; }
.grow { flex: 1; }
.view { width: 38px; height: 21px; }
.zoombtn { width: 15px; height: 20px; }
input[type=range] { appearance: none; width: 100px; height: 11px; background: linear-gradient(#999, #999) no-repeat center / 100% 1px; }
input[type=range]::-webkit-slider-thumb { appearance: none; width: 4px; height: 11px; background: #555; }
.pct { width: 59px; padding-right: 5px; }
```
